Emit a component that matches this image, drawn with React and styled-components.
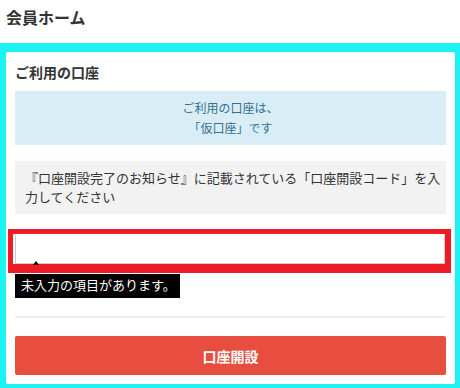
import styled, { createGlobalStyle } from "styled-components";

const GlobalStyle = createGlobalStyle`
  html, body {
    margin: 0;
    padding: 0;
    background: #fff;
  }
  body {
    font-family: "Noto Sans CJK JP", "Noto Sans", sans-serif;
    color: #333;
  }
`;

const Page = styled.div`
  width: 460px;
  height: 388px;
  display: flex;
  flex-direction: column;
`;

const Header = styled.h1`
  margin: 0;
  padding: 6px 6px 15px;
  font-size: 16px;
  line-height: 22px;
  font-weight: bold;
  color: #333;
`;

const Highlight = styled.div`
  background: #1cf2f2;
  padding: 9px 5px 4px 6px;
`;

const Panel = styled.section`
  background: #fff;
  border-radius: 2px;
  height: 332px;
  box-sizing: border-box;
  padding: 10px 9px 9px;
  display: flex;
  flex-direction: column;
`;

const Title = styled.h2`
  margin: 0 0 9px;
  font-size: 14px;
  line-height: 20px;
  font-weight: bold;
  color: #333;
`;

const Notice = styled.div`
  background: ${(p) => (p.$info ? "#d9edf7" : "#f2f2f2")};
  color: ${(p) => (p.$info ? "#31708f" : "#333")};
  text-align: ${(p) => (p.$info ? "center" : "left")};
  font-size: ${(p) => (p.$info ? "12px" : "13px")};
  line-height: ${(p) => (p.$info ? "20px" : "19px")};
  padding: ${(p) => (p.$info ? "7px 10px" : "7px 3px 8px 10px")};
  margin-bottom: ${(p) => (p.$info ? "16px" : "15px")};
`;

const Frame = styled.div`
  background: #ee1c25;
  margin: 0 -5px 0 -7px;
  padding: 5px 6px 9px 5px;
`;

const FieldBox = styled.div`
  background: #fff;
  padding-left: 2px;
`;

const Input = styled.input`
  display: block;
  width: 100%;
  height: 30px;
  box-sizing: border-box;
  border: 1px solid #ccc;
  border-top-color: #fff;
  padding: 0 8px;
  font-size: 14px;
  outline: none;
`;

const Tooltip = styled.div`
  position: relative;
  align-self: flex-start;
  margin-top: 1px;
  background: #000;
  color: #fff;
  font-size: 13px;
  line-height: 18px;
  padding: 2px 4px 4px 6px;

  &::before {
    content: "";
    position: absolute;
    left: 18px;
    top: -13px;
    border-left: 3px solid transparent;
    border-right: 3px solid transparent;
    border-bottom: 4px solid #000;
  }
`;

const Divider = styled.hr`
  margin: 18px 0;
  border: none;
  height: 2px;
  background: #eee;
`;

const SubmitButton = styled.button`
  height: 39px;
  border: none;
  border-radius: 2px;
  background: #e84e3f;
  color: #fff;
  font-family: inherit;
  font-size: 14px;
  font-weight: bold;
  cursor: pointer;
`;

const App = () => {
  return (
    <Page>
      <GlobalStyle />
      <Header>会員ホーム</Header>
      <Highlight>
        <Panel>
          <Title>ご利用の口座</Title>
          <Notice $info>
            ご利用の口座は、
            <br />
            「仮口座」です
          </Notice>
          <Notice>
            『口座開設完了のお知らせ』に記載されている「口座開設コード」を入力してください
          </Notice>
          <Frame>
            <FieldBox>
              <Input type="text" />
            </FieldBox>
          </Frame>
          <Tooltip>未入力の項目があります。</Tooltip>
          <Divider />
          <SubmitButton>口座開設</SubmitButton>
        </Panel>
      </Highlight>
    </Page>
  );
};

export default App;
